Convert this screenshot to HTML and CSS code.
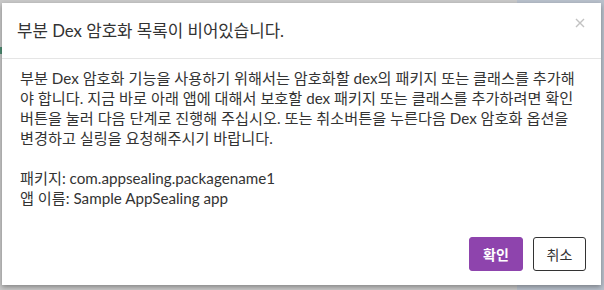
FILE: index.html
```html
<!DOCTYPE html>
<html lang="ko">
<head>
<meta charset="utf-8">
<link rel="stylesheet" href="styles.css">
</head>
<body>
<div class="modal">
  <div class="modal-header">
    <h4 class="modal-title">부분 Dex 암호화 목록이 비어있습니다.</h4>
    <button class="close" aria-label="닫기">
      <svg width="10" height="10" viewBox="0 0 10 10"><path d="M1 1L9 9M9 1L1 9" stroke="#c2c2c2" stroke-width="1.4" fill="none"/></svg>
    </button>
  </div>
  <div class="modal-body">
    <p class="message">부분 Dex 암호화 기능을 사용하기 위해서는 암호화할 dex의 패키지 또는 클래스를 추가해<br>야 합니다. 지금 바로 아래 앱에 대해서 보호할 dex 패키지 또는 클래스를 추가하려면 확인<br>버튼을 눌러 다음 단계로 진행해 주십시오. 또는 취소버튼을 누른다음 Dex 암호화 옵션을<br>변경하고 실링을 요청해주시기 바랍니다.</p>
    <p class="info">패키지: com.appsealing.packagename1<br>앱 이름: Sample AppSealing app</p>
  </div>
  <div class="modal-footer">
    <button class="btn btn-primary">확인</button>
    <button class="btn btn-default">취소</button>
  </div>
</div>
</body>
</html>
```
FILE: styles.css
```css
html, body {
  margin: 0;
  padding: 0;
}
body {
  width: 604px;
  height: 290px;
  overflow: hidden;
  font-family: Lato, "Noto Sans CJK KR", sans-serif;
  color: #333;
  background:
    linear-gradient(#4e8c73, #4e8c73) 0 47px / 2px 7px no-repeat,
    linear-gradient(to right, #c9c9c9 517px, #b9c1cc 517px);
  padding-top: 3px;
  box-sizing: border-box;
}
.modal {
  margin-left: 2px;
  width: 599px;
  height: 282px;
  background: #fff;
  box-shadow: 0 2px 5px rgba(0, 0, 0, 0.35);
  display: flex;
  flex-direction: column;
}
.modal-header {
  display: flex;
  justify-content: space-between;
  align-items: flex-start;
  padding: 0 15px 0 15px;
  height: 55px;
  border-bottom: 1px solid #e5e5e5;
}
.modal-title {
  margin: 0;
  font-size: 16.8px;
  font-weight: 400;
  line-height: 55px;
}
.close {
  border: 0;
  background: none;
  padding: 0;
  margin: 14px 0 0 0;
  width: 12px;
  height: 12px;
  display: flex;
  align-items: center;
  justify-content: center;
}
.modal-body {
  padding: 9px 6px 0 18px;
  font-size: 15.2px;
  line-height: 20px;
  flex: 1;
}
.message {
  margin: 0 0 20px 0;
}
.info {
  margin: 0;
}
.modal-footer {
  display: flex;
  justify-content: flex-end;
  gap: 10px;
  padding: 0 15px 14px 15px;
}
.btn {
  height: 34px;
  padding: 0;
  font-family: "Noto Sans CJK KR", sans-serif;
  font-size: 14px;
  border-radius: 3px;
  border: 1px solid transparent;
}
.btn-primary {
  width: 54px;
  background: #8e44ad;
  border-color: #8e44ad;
  color: #fff;
  font-weight: 700;
}
.btn-default {
  width: 53px;
  background: #fff;
  border-color: #333;
  color: #333;
}
```
